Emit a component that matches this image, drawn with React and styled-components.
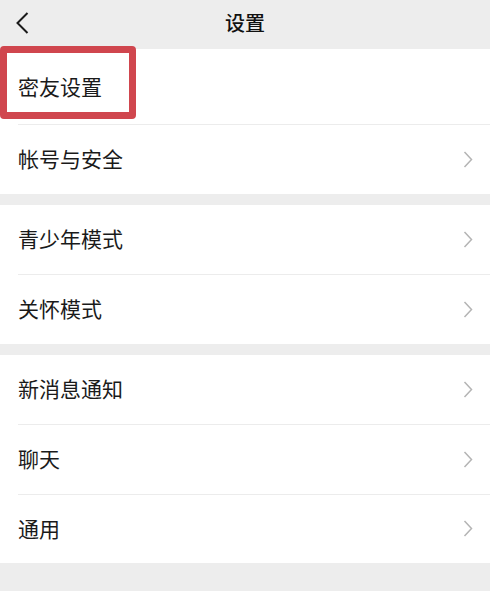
import React from "react";
import styled, { createGlobalStyle } from "styled-components";

const GlobalStyle = createGlobalStyle`
  html, body {
    margin: 0;
    padding: 0;
    background: #ededed;
  }
  body {
    font-family: "Noto Sans CJK SC", "Noto Sans", sans-serif;
    color: #1a1a1a;
  }
`;

const Page = styled.div`
  width: 490px;
  height: 591px;
  overflow: hidden;
  background: #ededed;
`;

const Header = styled.div`
  height: 49px;
  display: grid;
  grid-template-columns: 1fr auto 1fr;
  align-items: center;
`;

const BackButton = styled.div`
  padding-left: 16px;
  display: flex;
  align-items: center;
  height: 100%;
  margin-top: -4px;
`;

const Title = styled.div`
  font-size: 20px;
  font-weight: 500;
  color: #111;
  margin-top: -4px;
`;

const Group = styled.div`
  position: relative;
  background: #fff;
  margin-bottom: 11px;
`;

const Row = styled.div`
  padding-left: 18px;
  height: ${(props) => props.h || 69.5}px;
`;

const RowBody = styled.div`
  height: 100%;
  box-sizing: border-box;
  display: flex;
  align-items: center;
  justify-content: space-between;
  padding-right: 17px;
  border-top: ${(props) => (props.first ? "none" : "1px solid #ececec")};
`;

const Label = styled.span`
  font-size: 21px;
  color: #1a1a1a;
  margin-top: -2px;
`;

const Highlight = styled.div`
  position: absolute;
  left: 0;
  top: -3px;
  width: 136px;
  height: 73px;
  box-sizing: border-box;
  border: 7px solid #d0464e;
  border-radius: 4px;
  pointer-events: none;
`;

const Chevron = () => (
  <svg width="10" height="17" viewBox="0 0 10 17">
    <polyline
      points="1.5,1 8.5,8.5 1.5,16"
      fill="none"
      stroke="#b4b4b4"
      strokeWidth="1.5"
    />
  </svg>
);

const BackIcon = () => (
  <svg width="13" height="22" viewBox="0 0 13 22">
    <polyline
      points="11.5,1 1.5,11 11.5,21"
      fill="none"
      stroke="#1a1a1a"
      strokeWidth="2"
    />
  </svg>
);

const groups = [
  [
    { label: "密友设置", h: 75, arrow: false },
    { label: "帐号与安全" },
  ],
  [{ label: "青少年模式" }, { label: "关怀模式" }],
  [{ label: "新消息通知" }, { label: "聊天" }, { label: "通用" }],
];

function App() {
  return (
    <>
      <GlobalStyle />
      <Page>
        <Header>
          <BackButton>
            <BackIcon />
          </BackButton>
          <Title>设置</Title>
          <div />
        </Header>
        {groups.map((items, gi) => (
          <Group key={gi}>
            {items.map((item, i) => (
              <Row key={item.label} h={item.h}>
                <RowBody first={i === 0}>
                  <Label>{item.label}</Label>
                  {item.arrow !== false && <Chevron />}
                </RowBody>
              </Row>
            ))}
            {gi === 0 && <Highlight />}
          </Group>
        ))}
      </Page>
    </>
  );
}

export default App;
